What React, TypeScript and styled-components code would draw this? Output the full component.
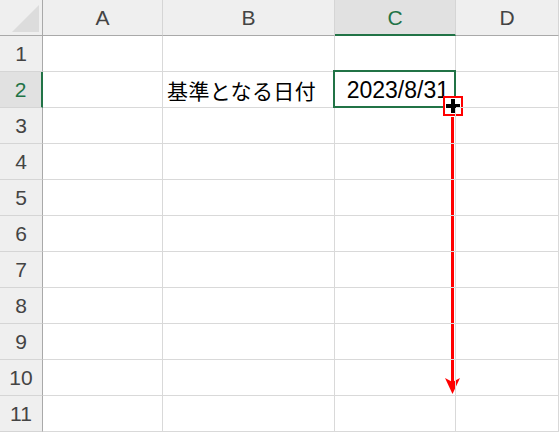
import React from 'react'
import styled, { createGlobalStyle, css } from 'styled-components'

const GlobalStyle = createGlobalStyle`
  html, body {
    margin: 0;
    padding: 0;
    background: #ffffff;
  }
`

const green = '#217346'

const Sheet = styled.div`
  position: relative;
  width: 559px;
  height: 432px;
  overflow: hidden;
  display: grid;
  grid-template-columns: 43px 120px 172px 121px 103px;
  grid-auto-rows: 36px;
  font-family: 'Liberation Sans', Arial, sans-serif;
  background: #ffffff;
`

const Corner = styled.div`
  box-sizing: border-box;
  background: #efefef;
  border-right: 1px solid #a9a9a9;
  border-bottom: 1px solid #a9a9a9;
  display: flex;
  align-items: flex-end;
  justify-content: flex-end;
  padding: 0 3px 3px 0;
`

const Triangle = styled.div`
  width: 27px;
  height: 27px;
  background: #dcdcdc;
  clip-path: polygon(100% 0, 100% 100%, 0 100%);
`

const ColHeader = styled.div<{ $active?: boolean }>`
  box-sizing: border-box;
  display: flex;
  align-items: center;
  justify-content: center;
  background: ${(p) => (p.$active ? '#e1e1e1' : '#efefef')};
  border-right: 1px solid #d5d5d5;
  border-bottom: 1px solid #a9a9a9;
  color: ${(p) => (p.$active ? green : '#444444')};
  font-size: 21px;
  padding-top: 1px;
  ${(p) =>
    p.$active &&
    css`
      border-bottom: 2px solid ${green};
    `}
`

const RowHeader = styled.div<{ $active?: boolean }>`
  box-sizing: border-box;
  display: flex;
  align-items: center;
  justify-content: center;
  background: ${(p) => (p.$active ? '#e1e1e1' : '#efefef')};
  border-right: 1px solid #a9a9a9;
  border-bottom: 1px solid #d5d5d5;
  color: ${(p) => (p.$active ? green : '#444444')};
  font-size: 21px;
  padding-top: 1px;
  ${(p) =>
    p.$active &&
    css`
      border-right: 2px solid ${green};
    `}
`

const Cell = styled.div<{ $align?: 'left' | 'right' }>`
  position: relative;
  box-sizing: border-box;
  display: flex;
  align-items: center;
  justify-content: ${(p) => (p.$align === 'right' ? 'flex-end' : 'flex-start')};
  padding: 1px 6px 0 4px;
  border-right: 1px solid #d9d9d9;
  border-bottom: 1px solid #d9d9d9;
  color: #000000;
  font-size: 23px;
  white-space: nowrap;
`

const JpText = styled.span`
  font-family: 'Noto Sans CJK JP', 'Noto Sans', sans-serif;
  font-size: 21px;
  letter-spacing: 0.4px;
`

const Selection = styled.div`
  position: absolute;
  left: -2px;
  top: -2px;
  right: -1px;
  bottom: -1px;
  border: 2px solid ${green};
  pointer-events: none;
`

const FillHandle = styled.div`
  position: absolute;
  right: -9px;
  bottom: -10px;
  box-sizing: border-box;
  width: 20px;
  height: 20px;
  border: 2px solid #ff0000;
  background: #ffffff;
  display: flex;
  align-items: center;
  justify-content: center;
`

const DragArrow = styled.svg`
  position: absolute;
  right: -9px;
  top: 45px;
  overflow: visible;
`

const columns = ['A', 'B', 'C', 'D']
const rows = [1, 2, 3, 4, 5, 6, 7, 8, 9, 10, 11]

const PlusIcon = () => (
  <svg width="14" height="14" viewBox="0 0 14 14">
    <rect x="5" y="0" width="4" height="14" fill="#000" />
    <rect x="0" y="5" width="14" height="4" fill="#000" />
  </svg>
)

const App = () => {
  return (
    <>
      <GlobalStyle />
      <Sheet>
        <Corner>
          <Triangle />
        </Corner>
        {columns.map((c) => (
          <ColHeader key={c} $active={c === 'C'}>
            {c}
          </ColHeader>
        ))}
        {rows.map((r) => (
          <React.Fragment key={r}>
            <RowHeader $active={r === 2}>{r}</RowHeader>
            {columns.map((c) => {
              if (r === 2 && c === 'B') {
                return (
                  <Cell key={c}>
                    <JpText>基準となる日付</JpText>
                  </Cell>
                )
              }
              if (r === 2 && c === 'C') {
                return (
                  <Cell key={c} $align="right">
                    2023/8/31
                    <Selection>
                      <DragArrow width="20" height="280" viewBox="0 0 20 280">
                        <rect x="8" y="0" width="3" height="266" fill="#ff0000" />
                        <polygon points="2,261 9.5,265 17,261 9.5,277" fill="#ff0000" />
                      </DragArrow>
                      <FillHandle>
                        <PlusIcon />
                      </FillHandle>
                    </Selection>
                  </Cell>
                )
              }
              return <Cell key={c} />
            })}
          </React.Fragment>
        ))}
      </Sheet>
    </>
  )
}

export default App
